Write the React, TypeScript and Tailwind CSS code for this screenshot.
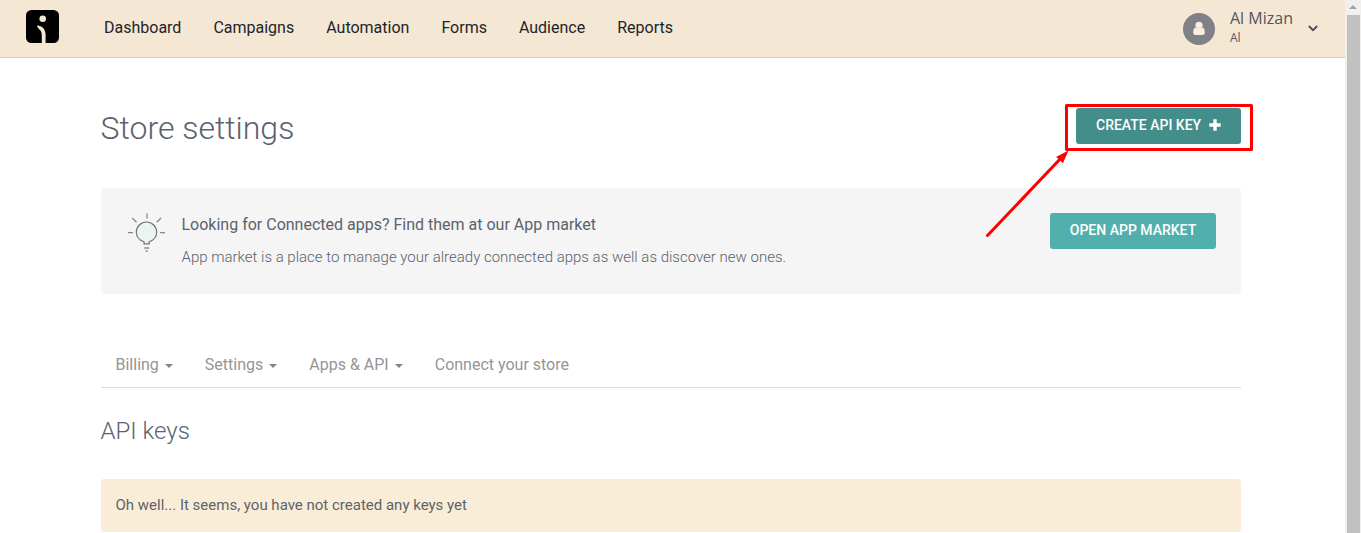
import React from "react";

const navItems = ["Dashboard", "Campaigns", "Automation", "Forms", "Audience", "Reports"];

const tabs = [
  { label: "Billing", menu: true },
  { label: "Settings", menu: true },
  { label: "Apps & API", menu: true },
  { label: "Connect your store", menu: false },
];

function Logo() {
  return (
    <svg width="33" height="33" viewBox="0 0 33 33" className="mt-[10px] shrink-0">
      <rect width="33" height="33" rx="5.5" fill="#000" />
      <circle cx="16.7" cy="8.7" r="3.3" fill="#f4e7d4" />
      <path d="M10.900 15.400C16 15.300 19.600 19 19.600 25v8H15.800v-7c0-2.800-.6-4.900-1.900-6.300-.9-.2-2.400-2.200-3-4.300z" fill="#f4e7d4" />
    </svg>
  );
}

function Avatar() {
  return (
    <svg width="32" height="32" viewBox="0 0 32 32" className="mt-[13px] shrink-0">
      <circle cx="16" cy="16" r="16" fill="#808186" />
      <circle cx="16" cy="12.300" r="3.600" fill="#f8efe2" />
      <path d="M12.600 14.500c-1.600.4-2.400 2-2.400 4.700 0 1.800.8 2.800 2.200 2.800h7.200c1.400 0 2.200-1 2.200-2.800 0-2.700-.8-4.300-2.400-4.700-1.800 1.700-5 1.700-6.800 0z" fill="#f8efe2" />
    </svg>
  );
}

function Bulb() {
  return (
    <svg width="38" height="40" viewBox="0 0 38 40" fill="none" className="mt-[25px] shrink-0">
      <path d="M16 30.800v-2c-4.300-1.400-7.700-5.200-7.700-9.600a10.200 10.200 0 0 1 20.400 0c0 4.400-3.200 8.200-7.500 9.600v2z" fill="#eaf5f2" stroke="#707375" strokeWidth="1.200" />
      <path d="M19 .5v5M4.300 5l4.200 4.200M33 5l-4.200 4.200M0 19.700h5M32 19.700h5" stroke="#85888a" strokeWidth="1.300" />
      <path d="M16.200 35h5M17.700 38h2" stroke="#85888a" strokeWidth="1.300" />
    </svg>
  );
}

export default function App() {
  return (
    <div className="flex h-[533px] w-[1361px] overflow-hidden bg-white font-['Roboto',sans-serif]">
      <div className="relative w-[1345px] shrink-0">
        <header className="flex h-[58px] border-b border-[#dfc9b0] bg-[#f4e7d4] pl-[26px]">
          <Logo />
          <nav className="ml-[45px] flex items-start gap-8 pt-[16px] text-[16px] leading-6 text-[#222429]">
            {navItems.map((n) => (
              <a key={n}>{n}</a>
            ))}
          </nav>
          <div className="ml-auto flex pr-[27px]">
            <Avatar />
            <div className="ml-[15px] w-[78px] pt-[8px] font-['Open_Sans',sans-serif] text-[#54565c]">
              <div className="text-[16px] leading-5 whitespace-nowrap">Al Mizan</div>
              <div className="text-[12px] leading-5">Al</div>
            </div>
            <svg width="10" height="7" viewBox="0 0 10 7" fill="none" className="mt-[25px]">
              <path d="M.8 1l4.200 4.200L9.200 1" stroke="#4b5057" strokeWidth="1.900" />
            </svg>
          </div>
        </header>

        <main className="ml-[100.5px] w-[1140px]">
          <div className="flex h-[130px] justify-between">
            <h1 className="pt-[50px] text-[32px] leading-10 font-light text-[#5b626d]">Store settings</h1>
            <button className="mt-[50px] flex h-[36px] w-[165px] items-center rounded-[3px] bg-[#438e8b] pb-[2px] pl-[20.5px] text-[14px] font-medium text-white">
              <span className="whitespace-nowrap">CREATE API KEY</span>
              <svg width="12" height="12" viewBox="0 0 12 12" className="ml-[8px]">
                <path d="M6 .3v11.400M.3 6h11.400" stroke="#fff" strokeWidth="3.400" />
              </svg>
            </button>
          </div>

          <section className="flex h-[106px] rounded-[4px] bg-[#f5f5f5] pr-[25px] pl-[27px]">
            <Bulb />
            <div className="ml-[16px] pt-[25px]">
              <h2 className="text-[16px] leading-6 text-[#5b626d]">Looking for Connected apps? Find them at our App market</h2>
              <p className="mt-[8px] text-[15px] leading-6 font-light text-[#5b626d]">
                App market is a place to manage your already connected apps as well as discover new ones.
              </p>
            </div>
            <button className="mt-[25px] ml-auto h-[36px] w-[166px] rounded-[3px] bg-[#51b0ad] pb-[2px] pl-px text-[14px] font-medium text-white">
              OPEN APP MARKET
            </button>
          </section>

          <div className="mt-[46px] flex h-[48px] items-start gap-8 border-b border-[#dbdbdb] pt-[13px] pl-[15px] text-[16px] leading-6 text-[#959595]">
            {tabs.map((t) => (
              <a key={t.label} className="flex items-center">
                {t.label}
                {t.menu && (
                  <svg width="8" height="4" viewBox="0 0 8 4" className="mt-[2px] ml-[6px]">
                    <path d="M0 0h8L4 4z" fill="#858585" />
                  </svg>
                )}
              </a>
            ))}
          </div>

          <h2 className="mt-[27px] text-[24px] leading-8 font-light text-[#5b626d]">API keys</h2>
          <div className="mt-[32px] h-[53px] rounded-[3px] bg-[#f9edd8] pt-[14px] pl-[15px] text-[15px] leading-6 text-[#5f6368]">
            Oh well... It seems, you have not created any keys yet
          </div>
        </main>

        <svg width="280" height="140" viewBox="980 100 280 140" fill="none" className="pointer-events-none absolute top-[100px] left-[980px]">
          <rect x="1066.500" y="105.500" width="185" height="44" stroke="#ff0000" strokeWidth="3" strokeLinejoin="round" />
          <path d="M987.500 235.500L1062 157" stroke="#ff0000" strokeWidth="3" strokeLinecap="round" />
          <path d="M1068.500 150.500L1056 157L1059.500 159.500L1062.800 163.500z" fill="#ff0000" />
        </svg>
      </div>
      <div className="flex w-[16px] flex-col items-center bg-[#f0f0f0]">
        <svg width="16" height="15" viewBox="0 0 16 15">
          <path d="M4 9L8 5l4 4z" fill="#a3a3a3" />
        </svg>
        <div className="ml-[1px] w-[13px] flex-1 bg-[#c1c1c1]" />
      </div>
    </div>
  );
}
